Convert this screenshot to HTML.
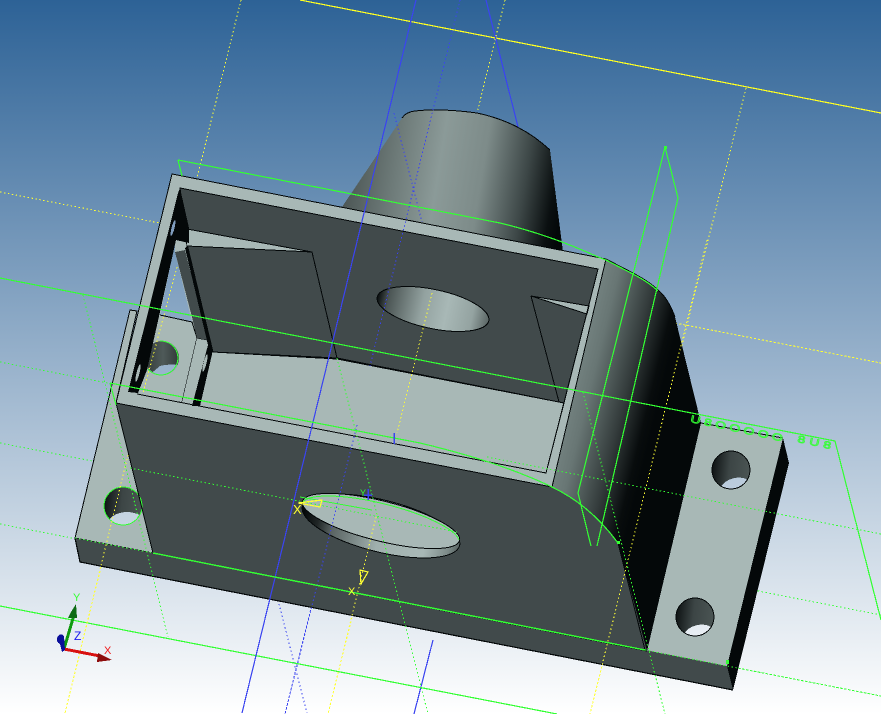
<!DOCTYPE html>
<html><head><meta charset="utf-8"><style>
html,body{margin:0;padding:0;width:881px;height:714px;overflow:hidden;background:#fff}
svg{display:block}
text{font-family:"Liberation Sans",sans-serif}
</style></head><body>
<svg width="881" height="714" viewBox="0 0 881 714" xmlns="http://www.w3.org/2000/svg">
<defs>
<linearGradient id="bg" gradientUnits="userSpaceOnUse" x1="0" y1="0" x2="0" y2="714"><stop offset="0" stop-color="#2d6296"/><stop offset="1" stop-color="#ffffff"/></linearGradient>
<linearGradient id="cone" gradientUnits="userSpaceOnUse" x1="345" y1="170" x2="562" y2="205">
<stop offset="0" stop-color="#4a5453"/><stop offset=".22" stop-color="#6d7a78"/><stop offset=".42" stop-color="#8b9a98"/><stop offset=".62" stop-color="#7d8b89"/><stop offset=".82" stop-color="#3c4646"/><stop offset=".95" stop-color="#0a0f10"/><stop offset="1" stop-color="#040809"/></linearGradient>
<linearGradient id="cyl" gradientUnits="userSpaceOnUse" x1="558" y1="392" x2="656" y2="416">
<stop offset="0" stop-color="#7c8b89"/><stop offset=".3" stop-color="#687674"/><stop offset=".65" stop-color="#343c3c"/><stop offset=".9" stop-color="#080c0d"/><stop offset="1" stop-color="#040809"/></linearGradient>
<linearGradient id="hole" x1="0" y1="0" x2="1" y2=".1"><stop offset="0" stop-color="#070b0c"/><stop offset=".5" stop-color="#3c4545"/><stop offset="1" stop-color="#4a5453"/></linearGradient>
<linearGradient id="hole2" x1="0" y1="0" x2="1" y2="0"><stop offset="0" stop-color="#2a3131"/><stop offset=".55" stop-color="#4f5a59"/><stop offset="1" stop-color="#2c3333"/></linearGradient>
<linearGradient id="wallh" x1="0" y1="0" x2="1" y2="0"><stop offset="0" stop-color="#080c0d"/><stop offset=".1" stop-color="#4c5655"/><stop offset=".4" stop-color="#93a2a0"/><stop offset=".62" stop-color="#a8b8b6"/><stop offset=".85" stop-color="#94a3a1"/><stop offset="1" stop-color="#5a6564"/></linearGradient>
<linearGradient id="fronth" gradientUnits="userSpaceOnUse" x1="303" y1="0" x2="460" y2="0"><stop offset="0" stop-color="#040809"/><stop offset=".1" stop-color="#202626"/><stop offset=".2" stop-color="#5a6463"/><stop offset=".5" stop-color="#a0b0ae"/><stop offset=".8" stop-color="#a8b8b6"/><stop offset=".95" stop-color="#7c8a88"/><stop offset="1" stop-color="#5f6a69"/></linearGradient>
<clipPath id="c1"><circle cx="123" cy="506" r="19"/></clipPath>
<clipPath id="c2"><circle cx="162" cy="358" r="17"/></clipPath>
<clipPath id="c3"><circle cx="731" cy="470" r="19"/></clipPath>
<clipPath id="c4"><circle cx="695" cy="617" r="19"/></clipPath>
</defs>

<rect width="881" height="714" fill="url(#bg)"/>

<g shape-rendering="crispEdges" fill="none">
<path d="M300,0L881,113" stroke="#ffff22" stroke-width="1.2"/>
<path d="M241,0L65,713M0,192L881,363M746,88L590,714M505,0L328,714" stroke="#ffff33" stroke-width="1" stroke-dasharray="1.5 2.5"/>
<path d="M486,0L518,127M416,0L242,713M433,640L414,714" stroke="#3a44f0" stroke-width="1.2"/>
<path d="M460,0L285,714M278,600L307,713" stroke="#3a44f0" stroke-width="1" stroke-dasharray="1.5 2.5"/>
<path d="M0,278L835,441L881,620M0,606L557,714" stroke="#33ff33" stroke-width="1.2"/>
<path d="M83,295L168,637M0,362L881,534M0,443L881,615M0,524L881,696M612,500L665,714M337,358L428,714" stroke="#33ff33" stroke-width="1" stroke-dasharray="1.5 2.5"/>
</g>

<g shape-rendering="crispEdges">
<!-- cone -->
<path d="M342,207L402,118Q406,112 415,111Q440,108 477,113Q520,122 550,150L563,252L500,240Z" fill="url(#cone)"/>
<path d="M402,118Q406,112 415,111Q440,108 477,113Q520,122 550,150" fill="none" stroke="#040809"/>

<!-- rounded side block -->
<path d="M606,259L633,273Q650,282 658,290Q668,298 675,317L701,423L647,651L618,543Q590,505 552,487Z" fill="url(#cyl)"/>
<path d="M606,259L633,273Q650,282 658,290Q668,298 675,317" fill="none" stroke="#040809"/>

<!-- right flange -->
<path d="M701,423L783,438L727,666L647,651Z" fill="#a8b8b6"/>
<path d="M783,438L789,463L733,690L727,666Z" fill="#040809"/>
<path d="M701,423L783,438" stroke="#040809" fill="none"/>

<!-- left flange -->
<path d="M130,310L137,311L116,403L153,553L75,538Z" fill="#a8b8b6" stroke="#040809"/>

<!-- base front face -->
<path d="M75,538L153,553L645,650L727,666L733,690L80,562Z" fill="#414a4b"/>
<path d="M75,538L80,562L733,690" fill="none" stroke="#040809" stroke-width="1.2"/>

<!-- front wall -->
<path d="M116,403L552,487Q590,505 618,543L647,651L153,553Z" fill="#414a4b"/>

<!-- rim -->
<path d="M172,174L606,259L552,487L116,403Z" fill="#a8b8b6" stroke="#040809" stroke-width="1"/>

<!-- back wall -->
<path d="M180,188L598,269L564,403L337,358L213,352L187,246Z" fill="#414a4b" stroke="#040809"/>
<path d="M187,229L312,252L187,246Z" fill="#a8b8b6"/>
<path d="M187,229L312,252L337,358M187,246L312,252" fill="none" stroke="#040809"/>
<path d="M531,296L589,306L587,314Z" fill="#a8b8b6" stroke="#040809"/>
<path d="M531,296L559,402" fill="none" stroke="#040809"/>

<!-- wall hole -->
<ellipse cx="433" cy="309" rx="57" ry="19.5" transform="rotate(12 433 309)" fill="url(#wallh)" stroke="#040809"/>

<!-- floor -->
<path d="M213,352L337,359L564,403L546,473L137,394Z" fill="#a8b8b6"/>
<path d="M213,352L337,359L564,403L546,473L137,394" fill="none" stroke="#040809"/>
<path d="M598,269L546,473" fill="none" stroke="#040809"/>

<!-- sky window at left -->
<path d="M175,243L160,315L192,322L175,252Z" fill="url(#bg)"/>
<path d="M160,315L147,375L138,393L182,402L197,338L192,322Z" fill="#a8b8b6"/>
<path d="M160,315L192,322L197,338L182,402" fill="none" stroke="#040809"/>
<path d="M197,338L208,340L200,406L182,402Z" fill="#a8b8b6"/>
<path d="M197,338L208,340" fill="none" stroke="#040809"/>
<path d="M175,252L192,317L197,338L208,340L185,250Z" fill="#414a4b"/>

<!-- hole behind struts -->
<g clip-path="url(#c2)"><rect x="140" y="338" width="42" height="40" fill="url(#hole2)"/><path d="M148,376L160,366Q166,364 180,365L180,380L148,380Z" fill="url(#bg)"/></g>
<path d="M160,341A17,17 0 1 1 148,369" fill="none" stroke="#33ff33"/>

<!-- black struts -->
<path d="M180,188L189,228L189,243L176,240L147,370L138,393L128,392L178,193Z" fill="#040809"/>
<path d="M185,248L188,246L213,350L200,406L192,406L208,345Z" fill="#040809"/>
<ellipse cx="173" cy="228" rx="1.5" ry="8" transform="rotate(14 173 228)" fill="#7f9cbd"/>
<ellipse cx="138" cy="373" rx="1.5" ry="9" transform="rotate(14 138 373)" fill="#a8b8b6"/>
<ellipse cx="205" cy="363" rx="1.5" ry="9" transform="rotate(14 205 363)" fill="#a8b8b6"/>

<!-- flange holes -->
<g clip-path="url(#c1)"><rect x="103" y="486" width="40" height="40" fill="url(#hole)"/><ellipse cx="127" cy="526" rx="20" ry="14" fill="url(#bg)"/></g>
<circle cx="123" cy="506" r="19" fill="none" stroke="#33ff33"/>
<g clip-path="url(#c3)"><rect x="711" y="450" width="40" height="40" fill="url(#hole)"/><ellipse cx="736" cy="490" rx="17" ry="12" transform="rotate(-15 736 490)" fill="url(#bg)"/></g>
<circle cx="731" cy="470" r="19" fill="none" stroke="#040809"/>
<g clip-path="url(#c4)"><rect x="675" y="597" width="40" height="40" fill="url(#hole)"/><ellipse cx="699" cy="637" rx="17" ry="12" transform="rotate(-15 699 637)" fill="url(#bg)"/></g>
<circle cx="695" cy="617" r="19" fill="none" stroke="#040809"/>

<!-- front hole -->
<ellipse cx="381" cy="526" rx="81" ry="26" transform="rotate(14 381 526)" fill="url(#fronth)" stroke="#040809"/>
<ellipse cx="381" cy="521" rx="81" ry="20" transform="rotate(14 381 521)" fill="#a8b8b6" stroke="#040809"/>
<path d="M303,502A81,20 14 0 1 459,540" fill="none" stroke="#33ff33"/>

<!-- model edges -->
<path d="M116,403L153,553L647,651" fill="none" stroke="#040809"/>
<path d="M618,543L645,650" fill="none" stroke="#040809"/>
</g>

<g shape-rendering="crispEdges" fill="none">
<path d="M416,0L242,713" stroke="#3a44f0" stroke-width="1.2"/>
<path d="M460,0L370,366M357,425L285,714M394,113L422,222" stroke="#3a44f0" stroke-width="1" stroke-dasharray="1.5 2.5"/>
<path d="M432,293L397,433M377,513L328,714M177,267L143,393M128,455L65,713" stroke="#ffff33" stroke-width="1" stroke-dasharray="1.5 2.5"/>
<path d="M680,324L881,363M707,240L590,714" stroke="#ffff33" stroke-width="1" stroke-dasharray="1.5 2.5"/>
<path d="M0,278L835,441" stroke="#33ff33" stroke-width="1.2"/>
<path d="M178,160L182,176M178,160L500,223Q550,235 598,257L606,260L633,274Q650,283 658,291" stroke="#33ff33" stroke-width="1.2"/>
<path d="M110,383L116,405M110,383L420,443Q500,462 552,487Q590,505 618,543" stroke="#33ff33" stroke-width="1.2"/>
<path d="M153,553L645,650" stroke="#33ff33" stroke-width="1.4"/>
<path d="M665,147L678,198L597,546M665,147L578,493L591,546" stroke="#33ff33" stroke-width="1.2"/>
<path d="M300,497L372,510" stroke="#33ff33" stroke-width="1"/>
<path d="M337,358L428,714M583,392L665,714M83,295L168,637" stroke="#33ff33" stroke-width="1" stroke-dasharray="1.5 2.5"/>
<path d="M130,468L457,532M487,457L881,534M645,650L881,696M75,538L153,553" stroke="#33ff33" stroke-width="1" stroke-dasharray="1.5 2.5"/>
<rect x="664" y="146" width="3" height="3" fill="#33ff33"/>
<rect x="617" y="541" width="3" height="3" fill="#33ff33"/>
<rect x="726" y="660" width="3" height="4" fill="#33ff33"/>
<path d="M298,503L322,500L320,507Z" stroke="#ffff33" stroke-width="1.2"/>
<path d="M360,570L368,572L361,584Z" stroke="#ffff33" stroke-width="1.2"/>
<path d="M368,489L368,500M364,495L372,495" stroke="#3a44f0" stroke-width="1.5"/>
<path d="M394,433L394,444" stroke="#3a44f0" stroke-width="1.5"/>
</g>

<text x="293" y="514" font-size="13" fill="#ffff33">X</text>
<text x="348" y="595" font-size="11" fill="#ffff33">X</text>
<text x="360" y="496" font-size="9" fill="#33ff33">Y</text>
<text transform="translate(690,422) rotate(12) scale(1.4,1)" font-size="10" fill="none" stroke="#33ff33" stroke-width=".7" letter-spacing="2.6">U8OOOOO</text>
<text transform="translate(797,442) rotate(12) scale(1.4,1)" font-size="10" fill="none" stroke="#33ff33" stroke-width=".7" letter-spacing="3">8U8</text>

<g shape-rendering="crispEdges">
<path d="M64,649L74,615" stroke="#0f9a0f" stroke-width="3" fill="none"/>
<path d="M76,604L71,612L68,618L77,618Z" fill="#0d6b14"/>
<path d="M64,649L100,656" stroke="#d81010" stroke-width="3" fill="none"/>
<path d="M112,660L98,653L97,662Z" fill="#8e0d0d"/>
<path d="M57,638Q60,632 64,636L65,650L62,652L60,644Q56,642 57,638Z" fill="#0a0f9a"/>
</g>
<text x="73" y="601" font-size="11" fill="#33ff33">Y</text>
<text x="74" y="640" font-size="12" fill="#1a1af0">Z</text>
<text x="104" y="654" font-size="11" fill="#f01818">X</text>
</svg>
</body></html>
